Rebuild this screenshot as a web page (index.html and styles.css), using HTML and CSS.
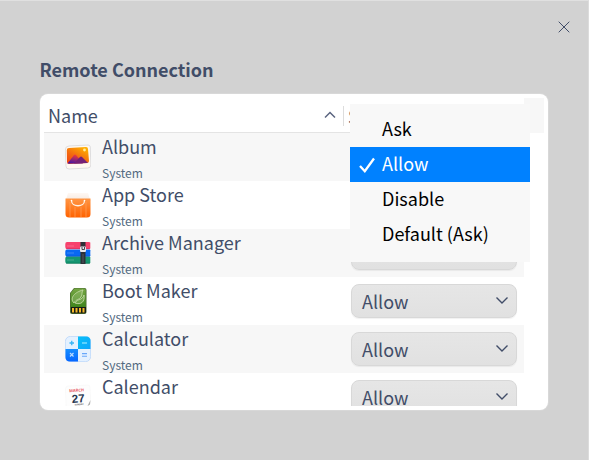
FILE: index.html
```html
<!DOCTYPE html>
<html lang="en">
<head>
<meta charset="utf-8">
<title>Remote Connection</title>
<link rel="stylesheet" href="styles.css">
</head>
<body>
<main class="window">
  <svg class="close" width="12" height="12" viewBox="0 0 12 12"><path d="M.7.7l10.600 10.600M11.300.7L.7 11.300"/></svg>
  <h1 class="title">Remote Connection</h1>
  <section class="panel">
    <div class="corner"></div>
    <header class="head">
      <span class="head-name">Name</span>
      <svg class="sort" width="12" height="8" viewBox="0 0 12 8"><path d="M1 6.500L6 1.500l5 5"/></svg>
      <span class="head-state">State</span>
    </header>
    <div class="list">
      <div class="row">
        <svg class="icon" viewBox="0 0 26 26">
          <defs><linearGradient id="sun" x1="0" y1="1" x2=".7" y2="0"><stop stop-color="#f33f12"/><stop offset=".5" stop-color="#f36b10"/><stop offset="1" stop-color="#ffae00"/></linearGradient>
          <linearGradient id="hill" x1="0" y1="1" x2=".4" y2="0"><stop stop-color="#3010b0"/><stop offset="1" stop-color="#ef3b3c"/></linearGradient></defs>
          <path d="M4 2l19-1q2 0 2.300 2l.5 18q0 3-3 3L4 25q-3 0-3-3L.3 6q0-4 3.700-4z" fill="#fff8f1" stroke="#d7d7d9" stroke-width=".8"/>
          <path d="M4 4l17-1q2 0 2 2l1 12q0 2-2 2L4 20q-2 0-2-2L1.800 6q0-2 2.200-2z" fill="url(#sun)"/>
          <path d="M2.500 19.500L9 11q1-1 2 0l7 8.500z" fill="url(#hill)"/><path d="M9 19.500l6-6.500q1-1 2 0l6 6z" fill="#742077"/>
          <circle cx="19.500" cy="6" r="1.400" fill="#ffeca0"/>
        </svg>
        <div class="app"><span class="app-name">Album</span><span class="app-kind">System</span></div>
      </div>
      <div class="row">
        <svg class="icon" viewBox="0 0 26 26">
          <defs><linearGradient id="bag" x2="0" y2="1"><stop stop-color="#ff9645"/><stop offset="1" stop-color="#ff6200"/></linearGradient>
          <linearGradient id="rim" x2="0" y2="1"><stop stop-color="#fff8f3"/><stop offset="1" stop-color="#f4e8df"/></linearGradient></defs>
          <path d="M3 1h20l2.500 8H.5z" fill="url(#rim)"/><path d="M.5 6.500h25V22q0 3.500-3.500 3.500H4Q.5 25.500.5 22z" fill="url(#bag)"/>
          <path d="M5 10v15M10 15v10M16 15v10M21 10v15" stroke="#ffa15a" stroke-opacity=".4" stroke-width="1.800"/>
          <path d="M6.500 8.500c0 7 13 7 13 0" fill="none" stroke="#fff2e5" stroke-width="1.300"/><circle cx="6.500" cy="8.500" r=".8" fill="#fff"/><circle cx="19.500" cy="8.500" r=".8" fill="#fff"/>
        </svg>
        <div class="app"><span class="app-name">App Store</span><span class="app-kind">System</span></div>
      </div>
      <div class="row">
        <svg class="icon" viewBox="0 0 26 26">
          <path d="M2 2h22q2 0 1.300 2v3q.7 2-1.300 2H2Q.3 9 .3 7V4q0-2 1.700-2z" fill="#f7416c"/>
          <path d="M2 9.500h22q2 0 1.300 2v3q.7 2-1.300 2H2q-1.700 0-1.700-2v-3q0-2 1.700-2z" fill="#0868f3"/>
          <path d="M2 16.500h22q2 0 1.300 2v3q.7 2-1.300 2H2q-1.700 0-1.700-2v-3q0-2 1.700-2z" fill="#159671"/>
          <path d="M1 8.700h24" stroke="#d1315e" stroke-width=".7"/><path d="M1 16.200h24" stroke="#0750c5" stroke-width=".7"/><path d="M1 23.200h24" stroke="#087653" stroke-width=".7"/>
          <path d="M2 6h7M2 13h7M2 20h7" stroke="#fff" stroke-opacity=".22"/>
          <path d="M15.500 2h5v22h-5z" fill="#2d3037"/><path d="M18 14v9" stroke="#535963" stroke-width="1"/>
          <rect x="15" y="6.500" width="6" height="5.500" rx="1" fill="#e8e8ed"/><path d="M17 7v2.500h2.500V7" fill="none" stroke="#353841" stroke-width=".9"/>
        </svg>
        <div class="app"><span class="app-name">Archive Manager</span><span class="app-kind">System</span></div>
        <div class="combo"><svg class="arrow" width="14" height="9" viewBox="0 0 14 9"><path d="M1.500 1.500L7 7l5.500-5.500"/></svg></div>
      </div>
      <div class="row">
        <svg class="icon" viewBox="0 0 26 26">
          <defs><linearGradient id="card" x2="0" y2="1"><stop stop-color="#76a744"/><stop offset="1" stop-color="#3f851d"/></linearGradient></defs>
          <path d="M9 0h10.500q2 0 2 2v22q0 2-2 2H7q-2 0-2-2V5z" fill="#4b6d31"/><path d="M9.500.5h9.500q1.700 0 1.700 1.700V19H5.800V5z" fill="url(#card)"/>
          <path d="M9 15C4 10 10 4 18 2c-2 3 0 4-2 7-2 3-5 2-7 6zm1 0c3-5 7-2 9-8 1 7-3 10-9 8z" fill="#a9c987" fill-opacity=".35" stroke="#c3d9a5" stroke-width=".9"/>
          <path d="M6 19h15v5q0 1.300-1.300 1.300H7.300Q6 25.300 6 24z" fill="#171d16"/><path d="M8 20v4.500M11.500 20v4.500M15 20v4.500M18.500 20v4.500" stroke="#f4b829" stroke-width="2"/>
        </svg>
        <div class="app"><span class="app-name">Boot Maker</span><span class="app-kind">System</span></div>
        <div class="combo">Allow<svg class="arrow" width="14" height="9" viewBox="0 0 14 9"><path d="M1.500 1.500L7 7l5.500-5.500"/></svg></div>
      </div>
      <div class="row">
        <svg class="icon" viewBox="0 0 26 26">
          <defs><linearGradient id="cyan" x2="1" y2="1"><stop stop-color="#08c0f8"/><stop offset="1" stop-color="#10a5fb"/></linearGradient><linearGradient id="blue" x2="0" y2="1"><stop stop-color="#168eff"/><stop offset="1" stop-color="#0666ff"/></linearGradient></defs>
          <rect x=".4" y=".4" width="25.200" height="25.200" rx="5" fill="#e4f1ff" stroke="#b9d5fa" stroke-width=".8"/>
          <path d="M13 .5h8q4.500 0 4.500 4.500v8H13z" fill="url(#cyan)"/><path d="M.5 13H13v12.500H5Q.5 25.500.5 21z" fill="url(#blue)"/>
          <path d="M4.500 7h4.500M6.750 4.750v4.500" stroke="#37b4f5" stroke-width="1.300"/><path d="M17 7h5" stroke="#8ce4ff" stroke-width="1.300"/><path d="M5 17l3.500 3.500M8.500 17L5 20.500" stroke="#b9dcff" stroke-width="1.200"/><path d="M17 17.600h5M17 20.200h5" stroke="#68a8fa" stroke-width="1.100"/>
        </svg>
        <div class="app"><span class="app-name">Calculator</span><span class="app-kind">System</span></div>
        <div class="combo">Allow<svg class="arrow" width="14" height="9" viewBox="0 0 14 9"><path d="M1.500 1.500L7 7l5.500-5.500"/></svg></div>
      </div>
      <div class="row">
        <svg class="icon" viewBox="0 0 26 26">
          <path d="M3 2l20-1q2 0 2 2l.7 14-4 8H4q-3 0-3-3L.5 5q0-3 2.500-3z" fill="#fdfdfd" stroke="#f4f4f4" stroke-width=".5"/><path d="M25.500 16l-3 6 2.500-1.500z" fill="#aaa"/>
          <g transform="rotate(-4 13 12)" text-anchor="middle"><text class="cal-month" x="12" y="7.700">MARCH</text><text class="cal-day" x="13" y="18.500">27</text><text class="cal-week" x="13.500" y="21.300">SUNDAY</text></g>
        </svg>
        <div class="app"><span class="app-name">Calendar</span></div>
        <div class="combo">Allow<svg class="arrow" width="14" height="9" viewBox="0 0 14 9"><path d="M1.500 1.500L7 7l5.500-5.500"/></svg></div>
      </div>
    </div>
  </section>
  <div class="menu">
    <div class="item">Ask</div>
    <div class="item selected"><svg class="check" width="18" height="16" viewBox="0 0 18 16"><path d="M2 9l4.800 5.200L16 1.500"/></svg>Allow</div>
    <div class="item">Disable</div>
    <div class="item">Default (Ask)</div>
  </div>
</main>
</body>
</html>
```
FILE: styles.css
```css
* { box-sizing: border-box; }
body { margin: 0; font-family: "Noto Sans CJK SC", "Noto Sans", sans-serif; font-size: 18px; color: #414d68; }
.window { position: relative; width: 589px; height: 460px; overflow: hidden; padding: 55px 40px 0; background: #d2d2d2; border-top: 1px solid #e0e0e0; border-right: 1px solid #dcdcdc; }
.close { position: absolute; left: 557.500px; top: 19.500px; fill: none; stroke: #414d68; stroke-width: 1; }
.title { margin: 0 0 11px -.5px; height: 27px; line-height: 27px; font-size: 18px; font-weight: 700; }
.panel { position: relative; width: 508px; height: 316px; padding: 6px 4px 4px; background: #fff; border-radius: 8px; box-shadow: 0 0 0 1px rgba(255, 255, 255, .15); }
.corner { position: absolute; left: 484px; top: 4px; width: 20px; height: 35px; background: #f7f7f7; }
.head { display: flex; align-items: center; width: 480px; height: 33px; border-bottom: 1px solid #e4e4e4; }
.head-name { flex: 1; padding-left: 4px; line-height: 28px; margin-top: -3px; }
.sort { margin: -2px 7px 0 0; fill: none; stroke: #5b6580; stroke-width: 1.5; }
.head-state { width: 181px; height: 20px; line-height: 20px; padding-left: 4px; border-left: 1px solid #ddd; }
.list { width: 480px; height: 273px; overflow: hidden; }
.row { display: flex; height: 48px; }
.row:nth-child(odd) { background: #f7f7f7; }
.icon { flex: none; width: 26px; height: 26px; margin: 11px 11px 0 21px; }
.app { flex: 1; display: flex; flex-direction: column; }
.app-name { height: 29px; line-height: 27px; }
.app-kind { height: 19px; line-height: 22px; font-size: 12px; color: #526a7f; }
.combo { flex: none; display: flex; align-items: center; width: 166px; height: 34px; margin: 7px 7px 0 0; padding: 0 7px 0 10px; background: linear-gradient(#e6e6e6, #e1e1e1); border: 1px solid #d8d8d8; border-radius: 8px; box-shadow: 0 1px 1px rgba(0, 0, 0, .06); }
.arrow { margin: -1px 0 0 auto; fill: none; stroke: #414d68; stroke-width: 1.4; }
.menu { position: absolute; left: 350px; top: 103px; width: 180px; height: 158px; padding-top: 8px; background: #f8f8f8; color: #000; }
.item { position: relative; height: 35px; line-height: 32px; padding-left: 32px; }
.selected { background: #0081ff; color: #fff; }
.check { position: absolute; left: 8px; top: 10px; fill: none; stroke: #fff; stroke-width: 2.300; }
.cal-month { font: 700 4px "Noto Sans", sans-serif; fill: #e8585f; }
.cal-day { font: 700 11.500px "Liberation Sans", sans-serif; fill: #273550; }
.cal-week { font: 700 2.200px "Noto Sans", sans-serif; fill: #555; }
```
